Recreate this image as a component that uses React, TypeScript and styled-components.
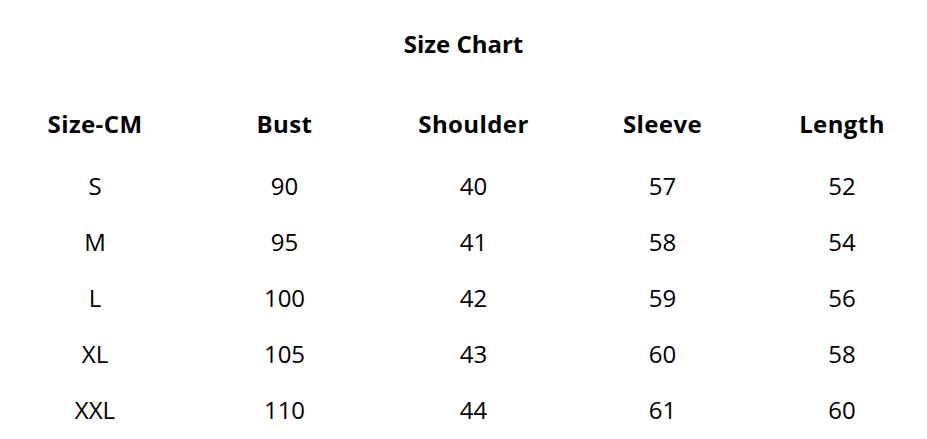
import React from 'react';
import styled, { createGlobalStyle } from 'styled-components';

const GlobalStyle = createGlobalStyle`
  html, body {
    margin: 0;
    padding: 0;
    background: #ffffff;
  }
  body {
    font-family: 'Open Sans', 'Noto Sans', sans-serif;
    color: #000000;
  }
`;

const Page = styled.div`
  width: 927px;
  height: 439px;
  overflow: hidden;
  background: #ffffff;
`;

const Title = styled.h1`
  margin: 0;
  padding-top: 29px;
  height: 30px;
  line-height: 30px;
  font-size: 24px;
  font-weight: 700;
  text-align: center;
`;

const Table = styled.div`
  margin-top: 36px;
  display: grid;
  grid-template-columns: 190px 189px 189px 189px 170px;
`;

const Cell = styled.div<{ $head?: boolean }>`
  height: 56px;
  display: flex;
  align-items: center;
  justify-content: center;
  font-size: 24px;
  font-weight: ${p => (p.$head ? 700 : 400)};
  margin-bottom: ${p => (p.$head ? '6px' : '0')};
  letter-spacing: ${p => (p.$head ? '0.4px' : '0')};
`;

const headers = ['Size-CM', 'Bust', 'Shoulder', 'Sleeve', 'Length'];

const rows = [
  ['S', '90', '40', '57', '52'],
  ['M', '95', '41', '58', '54'],
  ['L', '100', '42', '59', '56'],
  ['XL', '105', '43', '60', '58'],
  ['XXL', '110', '44', '61', '60'],
];

export default function App() {
  return (
    <Page>
      <GlobalStyle />
      <Title>Size Chart</Title>
      <Table>
        {headers.map(h => (
          <Cell key={h} $head>{h}</Cell>
        ))}
        {rows.map(r =>
          r.map((v, i) => <Cell key={r[0] + i}>{v}</Cell>)
        )}
      </Table>
    </Page>
  );
}
